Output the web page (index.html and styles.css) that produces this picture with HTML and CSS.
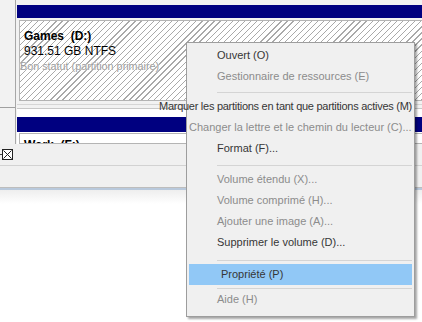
FILE: index.html
```html
<!DOCTYPE html>
<html lang="fr">
<head>
<meta charset="utf-8">
<title>Gestion des disques</title>
<link rel="stylesheet" href="styles.css">
</head>
<body>
<div class="screen">
  <div class="volumes">
    <div class="gutter"><div class="gutter-line"></div></div>
    <div class="disks">
      <div class="disk first">
        <div class="bar"></div>
        <div class="part hatch">
          <div class="name">Games&nbsp; (D:)</div>
          <div class="size">931.51 GB NTFS</div>
          <div class="status">Bon statut (partition primaire)</div>
        </div>
      </div>
      <div class="disk second">
        <div class="bar"></div>
        <div class="part plain">
          <div class="name">Work&nbsp; (F:)</div>
        </div>
      </div>
    </div>
  </div>
  <div class="legend">
    <svg class="legend-icon" width="16" height="12" viewBox="0 0 16 12">
      <line x1="0" y1="6.5" x2="2" y2="6.5" stroke="#444" stroke-width="1"/>
      <rect x="2.5" y="1.5" width="10" height="10" fill="#fff" stroke="#222" stroke-width="1"/>
      <line x1="3.5" y1="2.5" x2="11.5" y2="10.5" stroke="#222" stroke-width="1"/>
      <line x1="11.5" y1="2.5" x2="3.5" y2="10.5" stroke="#222" stroke-width="1"/>
    </svg>
  </div>
  <div class="toolbar"></div>
  <div class="lower"></div>

  <ul class="menu">
    <li class="item on">Ouvert (O)</li>
    <li class="item off">Gestionnaire de ressources (E)</li>
    <li class="sep sep1"></li>
    <li class="item on wide">Marquer les partitions en tant que partitions actives (M)</li>
    <li class="item off long">Changer la lettre et le chemin du lecteur (C)...</li>
    <li class="item on">Format (F)...</li>
    <li class="sep sep2"></li>
    <li class="item off">Volume étendu (X)...</li>
    <li class="item off">Volume comprimé (H)...</li>
    <li class="item off">Ajouter une image (A)...</li>
    <li class="item on">Supprimer le volume (D)...</li>
    <li class="sep sep3"></li>
    <li class="item on selected">Propriété (P)</li>
    <li class="sep sep4"></li>
    <li class="item off">Aide (H)</li>
  </ul>
</div>
</body>
</html>
```

FILE: styles.css
```css
* { box-sizing: border-box; }
html, body { margin: 0; padding: 0; }
body {
  width: 422px;
  height: 322px;
  overflow: hidden;
  background: #ffffff;
  font-family: "Liberation Sans", Arial, sans-serif;
}
.screen {
  position: relative;
  width: 422px;
  height: 322px;
  overflow: hidden;
  background: #ffffff;
}

/* disk area */
.volumes {
  display: flex;
  height: 144px;
  overflow: hidden;
}
.gutter {
  width: 16px;
  background: #f2f2f2;
  border-right: 1px solid #a7a7a7;
  padding-top: 107px;
}
.gutter-line {
  height: 1px;
  background: #a0a0a0;
}
.disks {
  flex: 1;
  min-height: 0;
  padding-left: 1px;
  padding-top: 5px;
  background: #f2f2f2;
  display: flex;
  flex-direction: column;
  overflow: hidden;
}
.bar {
  height: 13px;
  flex: none;
  background: #000080;
}
.disk.first {
  flex: none;
  padding-bottom: 3px;
  border-bottom: 1px solid #d6d6d6;
}
.disk.first .bar { margin-bottom: 2px; }
.part {
  margin-left: 2px;
  border: 1px solid #b4b4b4;
  border-right: none;
}
.hatch {
  height: 81px;
  padding: 8px 0 0 4px;
  background: repeating-linear-gradient(-45deg, #a9a9a9 0 0.9px, #ffffff 0.9px 4.3px);
  font-size: 12px;
  line-height: 15px;
  color: #000;
}
.hatch .name { font-weight: bold; }
.hatch .size { text-shadow: 0 0 2px #fff; }
.hatch .status {
  margin-left: -4px;
  font-size: 10.8px;
  color: #9c9c9c;
  text-shadow: 0 0 2px #fff, 0 0 1px #fff;
}
.disk.second {
  flex: 1;
  min-height: 0;
  margin-top: 3px;
  border-top: 1px solid #c8c8c8;
  background: #ffffff;
  padding-top: 8px;
  display: flex;
  flex-direction: column;
}
.disk.second .bar { height: 15px; }
.plain {
  flex: 1;
  min-height: 0;
  margin-top: 1px;
  background: #ffffff;
  overflow: hidden;
  padding: 4px 0 0 4px;
  font-size: 12px;
  line-height: 15px;
  font-weight: bold;
  color: #000;
}

/* legend / toolbar */
.legend {
  height: 22px;
  background: #f0f0f0;
  border-bottom: 1px solid #d2d2d2;
  padding: 4px 0 0 0;
}
.legend-icon { display: block; }
.toolbar {
  height: 24px;
  background: #f0f0f0;
  border-bottom: 2px solid #b9c9dc;
  box-shadow: inset 0 -1px 0 #bdbdbd;
}
.lower {
  height: 132px;
  background: linear-gradient(#eeeeee, #ffffff 14px);
}

/* context menu */
.menu {
  position: absolute;
  left: 186px;
  top: 42px;
  width: 229px;
  height: 275px;
  margin: 0;
  padding: 2px 2px 0 2px;
  list-style: none;
  background: #f0f0f0;
  border: 1px solid #9d9d9d;
  box-shadow: 2px 2px 2px rgba(0, 0, 0, 0.35);
  font-size: 11px;
  font-family: "Liberation Sans", Arial, sans-serif;
}
.item {
  height: 21px;
  line-height: 21px;
  padding-left: 28px;
  white-space: nowrap;
}
.item.on { color: #363636; }
.item.off { color: #8c8c8c; }
.item.wide {
  margin-left: -30px;
  padding-left: 0;
  letter-spacing: -0.27px;
}
.item.long { padding-left: 0; }
.item.selected {
  background: #91c8f6;
  padding-left: 32px;
}
.sep {
  height: 1px;
  margin-left: 28px;
  background: #d4d4d4;
}
.sep1 { margin-top: 5px; margin-bottom: 3px; }
.sep2 { margin-top: 6px; margin-bottom: 3px; }
.sep3 { margin-top: 7px; margin-bottom: 3px; }
.sep4 { margin-top: 3px; margin-bottom: 0; }
```
